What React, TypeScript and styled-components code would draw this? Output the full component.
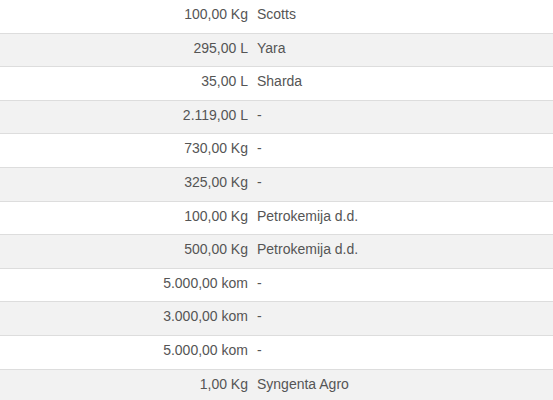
import React from "react";
import styled, { createGlobalStyle } from "styled-components";

const Global = createGlobalStyle`
  html, body { margin: 0; padding: 0; background: #fff; }
  body { font-family: "Liberation Sans", Arial, sans-serif; }
`;

const Table = styled.div`
  display: flex;
  flex-direction: column;
  margin-top: -1px;
  width: 553px;
  font-size: 14px;
  color: #555;
`;

const Row = styled.div<{ $striped: boolean }>`
  display: grid;
  grid-template-columns: 253px 1fr;
  height: 32.6px;
  border-top: 1px solid #ddd;
  background: ${(p) => (p.$striped ? "#f2f2f2" : "#fff")};
`;

const Qty = styled.div`
  text-align: right;
  padding: 4px 5px 0 0;
  line-height: 20px;
  white-space: nowrap;
`;

const Maker = styled.div`
  padding: 4px 0 0 4px;
  line-height: 20px;
  white-space: nowrap;
`;

const rows: [string, string][] = [
  ["100,00 Kg", "Scotts"],
  ["295,00 L", "Yara"],
  ["35,00 L", "Sharda"],
  ["2.119,00 L", "-"],
  ["730,00 Kg", "-"],
  ["325,00 Kg", "-"],
  ["100,00 Kg", "Petrokemija d.d."],
  ["500,00 Kg", "Petrokemija d.d."],
  ["5.000,00 kom", "-"],
  ["3.000,00 kom", "-"],
  ["5.000,00 kom", "-"],
  ["1,00 Kg", "Syngenta Agro"],
];

export default function App() {
  return (
    <>
      <Global />
      <Table>
        {rows.map(([q, m], i) => (
          <Row key={i} $striped={i % 2 === 1}>
            <Qty>{q}</Qty>
            <Maker>{m}</Maker>
          </Row>
        ))}
      </Table>
    </>
  );
}
